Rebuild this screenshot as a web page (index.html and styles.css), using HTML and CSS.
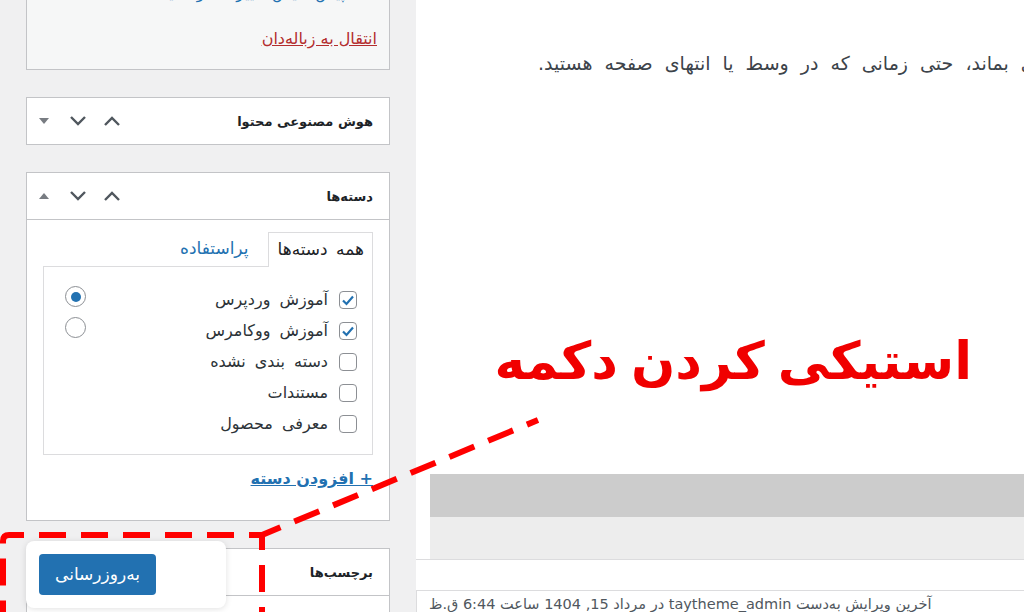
FILE: index.html
```html
<!DOCTYPE html>
<html lang="fa" dir="rtl">
<head>
	<meta charset="UTF-8">
	<title>ویرایش نوشته</title>
	<link rel="stylesheet" href="styles.css">
</head>
<body>
<div id="wrapper">
	<div class="editor-col">
		<div class="post-body">
			<p class="post-text"><span>برای اینکه دکمه به‌روزرسانی همیشه در دسترس باقی بماند، حتی زمانی که در وسط یا انتهای صفحه هستید.</span></p>
		</div>
		<div class="editor-foot">
			<div class="toolbar-dark"></div>
			<div class="toolbar-light"></div>
		</div>
		<div class="editor-gap"></div>
		<div class="status-bar">
			<span class="last-edit">آخرین ویرایش به‌دست taytheme_admin در مرداد 15, 1404 ساعت 6:44 ق.ظ</span>
		</div>
	</div>

	<div class="side-col">
		<div class="postbox publish-box">
			<a class="preview-link">پیش‌نمایش تغییرات در سایت</a>
			<a class="trash-link">انتقال به زباله‌دان</a>
		</div>

		<div class="postbox">
			<div class="postbox-header">
				<h2>هوش مصنوعی محتوا</h2>
				<div class="handle-actions">
					<span class="handle-btn"><svg width="18" height="10" viewBox="0 0 18 10"><polyline points="2,9 9,2 16,9" fill="none" stroke="#50575e" stroke-width="2.4"/></svg></span>
					<span class="handle-btn"><svg width="18" height="10" viewBox="0 0 18 10"><polyline points="2,1 9,8 16,1" fill="none" stroke="#50575e" stroke-width="2.4"/></svg></span>
					<span class="handle-btn"><i class="tri tri-down"></i></span>
				</div>
			</div>
		</div>

		<div class="postbox">
			<div class="postbox-header open">
				<h2>دسته‌ها</h2>
				<div class="handle-actions">
					<span class="handle-btn"><svg width="18" height="10" viewBox="0 0 18 10"><polyline points="2,9 9,2 16,9" fill="none" stroke="#50575e" stroke-width="2.4"/></svg></span>
					<span class="handle-btn"><svg width="18" height="10" viewBox="0 0 18 10"><polyline points="2,1 9,8 16,1" fill="none" stroke="#50575e" stroke-width="2.4"/></svg></span>
					<span class="handle-btn"><i class="tri tri-up"></i></span>
				</div>
			</div>
			<div class="inside">
				<ul class="cat-tabs">
					<li class="tab active">همه دسته‌ها</li>
					<li class="tab"><a>پراستفاده</a></li>
				</ul>
				<div class="tab-panel">
					<ul class="cat-list">
						<li>
							<span class="cb checked"><svg width="16" height="16" viewBox="0 0 16 16"><polyline points="3,8.5 6.5,12 13,4.5" fill="none" stroke="#2271b1" stroke-width="2.2"/></svg></span>
							<span class="cat-name">آموزش وردپرس</span>
							<span class="radio checked"></span>
						</li>
						<li>
							<span class="cb checked"><svg width="16" height="16" viewBox="0 0 16 16"><polyline points="3,8.5 6.5,12 13,4.5" fill="none" stroke="#2271b1" stroke-width="2.2"/></svg></span>
							<span class="cat-name">آموزش ووکامرس</span>
							<span class="radio"></span>
						</li>
						<li>
							<span class="cb"></span>
							<span class="cat-name">دسته بندی نشده</span>
						</li>
						<li>
							<span class="cb"></span>
							<span class="cat-name">مستندات</span>
						</li>
						<li>
							<span class="cb"></span>
							<span class="cat-name">معرفی محصول</span>
						</li>
					</ul>
				</div>
				<a class="add-cat">+ افزودن دسته</a>
			</div>
		</div>

		<div class="postbox">
			<div class="postbox-header open">
				<h2>برچسب‌ها</h2>
			</div>
			<div class="inside tall"></div>
		</div>

		<div class="sticky-update">
			<a class="button-primary">به‌روزرسانی</a>
		</div>
	</div>

	<!-- annotation over the screenshot -->
	<svg class="marks" width="1024" height="612" viewBox="0 0 1024 612">
		<g fill="none" stroke="#ff0000" stroke-width="6" stroke-dasharray="27 15">
			<path d="M262 535 H9 Q3 535 3 541 V612" stroke-dashoffset="14"/>
			<path d="M262 535 V612" stroke-dashoffset="12"/>
			<path d="M538 420 L262 535" stroke-dashoffset="15"/>
		</g>
	</svg>
	<h2 class="note-title">استیکی کردن دکمه</h2>
</div>
</body>
</html>
```

FILE: styles.css
```css
body,div,ul,li,h2,p{
    margin: 0;
    padding: 0;
}
body{
    font-family: "DejaVu Sans", "Noto Sans", sans-serif;
    font-size: 15px;
    color: #1d2327;
    background: #f0f0f1;
    overflow: hidden;
}
ul{
    list-style: none;
}
a{
    text-decoration: none;
    cursor: pointer;
}
#wrapper{
    position: relative;
    display: flex;
    width: 1024px;
    height: 612px;
    overflow: hidden;
}

/* editor column */
.editor-col{
    width: 608px;
    flex-shrink: 0;
    background: #fff;
    display: flex;
    flex-direction: column;
}
.post-body{
    height: 474px;
    flex-shrink: 0;
}
.post-text{
    direction: ltr;
    white-space: nowrap;
    padding: 50px 0 0 122px;
    line-height: 26px;
    font-size: 19px;
    word-spacing: 6px;
    color: #3c434a;
}
.post-text span{
    direction: rtl;
    unicode-bidi: embed;
}
.editor-foot{
    padding-left: 14px;
    border-bottom: 1px solid #dcdcde;
}
.toolbar-dark{
    height: 43px;
    background: #cccccc;
}
.toolbar-light{
    height: 42px;
    background: #ededed;
}
.editor-gap{
    height: 30px;
    flex-shrink: 0;
}
.status-bar{
    direction: ltr;
    border-top: 1px solid #dcdcde;
    border-left: 1px solid #dcdcde;
    padding: 5px 12px;
    font-size: 14.5px;
    color: #50575e;
}
.status-bar .last-edit{
    direction: rtl;
    unicode-bidi: embed;
}

/* sidebar */
.side-col{
    position: relative;
    width: 416px;
    flex-shrink: 0;
    box-sizing: border-box;
    padding: 0 26px;
}
.postbox{
    background: #fff;
    border: 1px solid #c3c4c7;
    margin-bottom: 27px;
}
.publish-box{
    margin-top: -40px;
    height: 110px;
    box-sizing: border-box;
    background: #f6f7f7;
    padding: 20px 12px 0 0;
}
.publish-box a{
    display: block;
    line-height: 24px;
}
.preview-link{
    color: #2271b1;
    font-size: 16px;
    padding-right: 32px;
}
.trash-link{
    margin-top: 22px;
    font-size: 16px;
    color: #b32d2e;
    text-decoration: underline !important;
}
.postbox-header{
    display: flex;
    align-items: center;
    height: 46px;
    padding-right: 16px;
}
.postbox-header.open{
    border-bottom: 1px solid #c3c4c7;
}
.postbox-header h2{
    font-size: 13px;
    font-weight: bold;
    color: #1d2327;
}
.handle-actions{
    display: flex;
    margin-right: auto;
}
.handle-btn{
    display: flex;
    align-items: center;
    justify-content: center;
    width: 34px;
    height: 46px;
}
i.tri{
    width: 0;
    height: 0;
    border-left: 5px solid transparent;
    border-right: 5px solid transparent;
}
i.tri-down{
    border-top: 6px solid #787c82;
}
i.tri-up{
    border-bottom: 6px solid #787c82;
}
.inside{
    padding: 12px 16px 29px;
}
.inside.tall{
    height: 60px;
}
.cat-tabs{
    display: flex;
    gap: 12px;
}
.cat-tabs .tab{
    height: 34px;
    line-height: 33px;
    padding: 0 8px;
    box-sizing: border-box;
    font-size: 17px;
    word-spacing: 3px;
}
.cat-tabs .tab a{
    color: #2271b1;
}
.cat-tabs .tab.active{
    position: relative;
    height: 35px;
    margin-bottom: -1px;
    background: #fff;
    border: 1px solid #dcdcde;
    border-bottom: none;
    color: #1d2327;
}
.tab-panel{
    border: 1px solid #dcdcde;
    padding: 17px 15px 15px 21px;
}
.cat-list li{
    display: flex;
    align-items: center;
    gap: 11px;
    height: 31px;
}
.cb{
    width: 18px;
    height: 18px;
    box-sizing: border-box;
    border: 1px solid #8c8f94;
    border-radius: 4px;
    display: flex;
    align-items: center;
    justify-content: center;
}
.cat-name{
    font-size: 16px;
    word-spacing: 4px;
    color: #2c3338;
}
.radio{
    margin-right: auto;
    width: 21px;
    height: 21px;
    box-sizing: border-box;
    border: 1px solid #8c8f94;
    border-radius: 50%;
    display: flex;
    align-items: center;
    justify-content: center;
    position: relative;
    top: -3px;
}
.radio.checked:after{
    content: "";
    width: 10px;
    height: 10px;
    border-radius: 50%;
    background: #2271b1;
}
.add-cat{
    display: inline-block;
    margin-top: 12px;
    line-height: 24px;
    font-size: 16px;
    font-weight: bold;
    color: #2271b1;
    text-decoration: underline !important;
}

/* floating update box */
.sticky-update{
    position: absolute;
    left: 26px;
    bottom: 4px;
    width: 200px;
    height: 67px;
    box-sizing: border-box;
    padding: 13px;
    background: #fff;
    border-radius: 8px;
    box-shadow: 0 1px 6px rgba(0,0,0,.12);
    display: flex;
    justify-content: flex-end;
}
.button-primary{
    width: 117px;
    height: 41px;
    line-height: 40px;
    text-align: center;
    background: #2271b1;
    border-radius: 4px;
    color: #fff;
    font-size: 17px;
}

/* annotation */
.marks{
    position: absolute;
    top: 0;
    left: 0;
    pointer-events: none;
}
.note-title{
    position: absolute;
    right: 52px;
    top: 335px;
    font-size: 52px;
    line-height: 1;
    word-spacing: -5px;
    font-weight: bold;
    color: #f00000;
}
```
